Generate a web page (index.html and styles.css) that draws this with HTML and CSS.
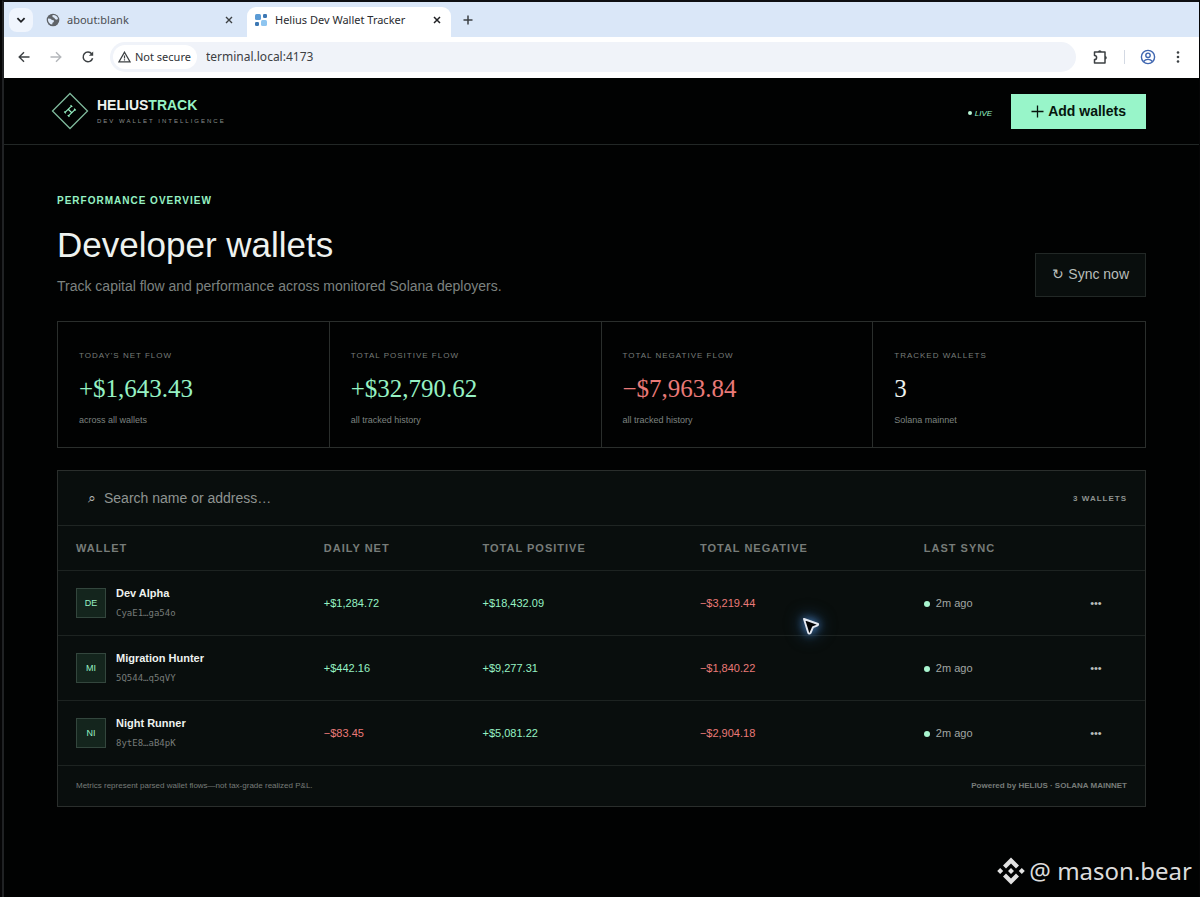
FILE: index.html
```html
<!DOCTYPE html>
<html lang="en">
  <head>
    <title>Helius Dev Wallet Tracker</title>
    <meta charset="utf-8" />
    <meta name="viewport" content="width=device-width, initial-scale=1" />
    <link rel="stylesheet" href="styles.css">
  </head>
  <body>
    <div class="browser">
      <div class="tabs">
        <button class="tab-list" aria-label="Search tabs">
          <svg width="12" height="12" viewBox="0 0 10 10"><path d="M2 3.500l3 3 3-3" fill="none" stroke="#202124" stroke-width="1.500" /></svg>
        </button>
        <div class="tab">
          <svg width="14" height="14" viewBox="0 0 14 14"><circle cx="7" cy="7" r="6.300" fill="#5f6368" /><path d="M2 5.500l2.500.300 1.500 1.200 1.800.200v1.800l-1.300.700-.300 1.800C3.500 11.300 1.600 8.500 2 5.500zM6.500 2c2.500-.400 4.800 1 5.500 3.500l-1 1.200-1.800-.400-1-1.500L6.500 4z" fill="#dce8f8" /></svg>
          <span class="tab-title">about:blank</span>
          <button class="tab-close" aria-label="Close tab"><svg width="10" height="10" viewBox="0 0 10 10"><path d="M2 2l6 6M8 2l-6 6" stroke="#3c4043" stroke-width="1.400" /></svg></button>
        </div>
        <div class="tab active">
          <svg width="14" height="14" viewBox="0 0 14 14"><rect x="1" y="1" width="6" height="6" rx="1.500" fill="#5b9bd5" /><rect x="9" y="1" width="4" height="4" rx="1.200" fill="#3c78b4" /><rect x="1" y="9" width="4" height="4" rx="1.200" fill="#3c78b4" /><rect x="7" y="7" width="6" height="6" rx="1.500" fill="#8ec5f0" /></svg>
          <span class="tab-title">Helius Dev Wallet Tracker</span>
          <button class="tab-close" aria-label="Close tab"><svg width="10" height="10" viewBox="0 0 10 10"><path d="M2 2l6 6M8 2l-6 6" stroke="#202124" stroke-width="1.500" /></svg></button>
        </div>
        <button class="tab-new" aria-label="New tab"><svg width="12" height="12" viewBox="0 0 12 12"><path d="M6 1.500v9M1.500 6h9" stroke="#3c4043" stroke-width="1.500" /></svg></button>
      </div>
      <div class="toolbar">
        <div class="nav">
          <button aria-label="Back"><svg width="14" height="14" viewBox="0 0 14 14"><path d="M12.500 7h-10M7 2.200L2.200 7 7 11.800" fill="none" stroke="#3c4043" stroke-width="1.400" /></svg></button>
          <button aria-label="Forward"><svg width="14" height="14" viewBox="0 0 14 14"><path d="M1.500 7h10M7 2.200L11.800 7 7 11.800" fill="none" stroke="#b4b7bb" stroke-width="1.400" /></svg></button>
          <button aria-label="Reload"><svg width="14" height="14" viewBox="0 0 14 14"><path d="M11.600 8.200A4.800 4.800 0 1 1 10.800 4" fill="none" stroke="#3c4043" stroke-width="1.500" /><path d="M12.200 1.500v4.300H7.900z" fill="#3c4043" /></svg></button>
        </div>
        <div class="omnibox">
          <button class="secure">
            <svg width="13" height="12" viewBox="0 0 13 12"><path d="M6.500 1.200L12 10.800H1z" fill="none" stroke="#3c4043" stroke-width="1.300" /><path d="M6.500 4.500v3M6.500 8.300v1.200" stroke="#3c4043" stroke-width="1.200" /></svg>
            Not secure
          </button>
          <input class="url" type="text" value="terminal.local:4173" aria-label="Address" />
        </div>
        <div class="tools">
          <button aria-label="Extensions"><svg width="18" height="18" viewBox="0 0 18 18"><path d="M3.500 4h10.500v11H3.500v-3.400a2 2 0 0 0 0-4.200z" fill="none" stroke="#3c4043" stroke-width="1.500" stroke-linejoin="round" /><path d="M7 4a1.800 1.800 0 0 1 3.600 0zM14 8a1.800 1.800 0 0 1 0 3.600z" fill="#3c4043" /></svg></button>
          <span class="divider"></span>
          <button aria-label="Profile"><svg width="16" height="16" viewBox="0 0 16 16"><g fill="none" stroke="#3f66b0" stroke-width="1.400"><circle cx="8" cy="8" r="6.600" /><circle cx="8" cy="6.300" r="2.200" /><path d="M3.600 12.500c1.200-1.500 2.700-2.100 4.400-2.100s3.200.600 4.400 2.100" /></g></svg></button>
          <button aria-label="Menu"><svg width="14" height="14" viewBox="0 0 14 14" fill="#3c4043"><circle cx="7" cy="2.500" r="1.300" /><circle cx="7" cy="7" r="1.300" /><circle cx="7" cy="11.500" r="1.300" /></svg></button>
        </div>
      </div>

      <header class="header">
        <div class="brand">
          <svg width="38" height="38" viewBox="0 0 38 38"><path d="M19 1.500L36.500 19 19 36.500 1.500 19z" fill="none" stroke="#7fb99c" stroke-width="1.300" /><g transform="rotate(45 19 19)" fill="none" stroke="#96f2c4" stroke-width="1.200"><path d="M16.500 14.500v9M21.500 14.500v9M16.500 19h5M15.300 14.500h2.400M15.300 23.500h2.400M20.300 14.500h2.400M20.300 23.500h2.400" /></g></svg>
          <div>
            <div class="name">HELIUS<span class="green">TRACK</span></div>
            <div class="tagline">DEV WALLET INTELLIGENCE</div>
          </div>
        </div>
        <div class="actions">
          <em class="live">LIVE</em>
          <button class="add">
            <svg width="13" height="13" viewBox="0 0 13 13"><path d="M6.500 .500v12M.500 6.500h12" stroke="#06150d" stroke-width="1.300" /></svg>
            Add wallets
          </button>
        </div>
      </header>

      <main class="main">
        <section class="intro">
          <div>
            <div class="eyebrow">PERFORMANCE OVERVIEW</div>
            <h1>Developer wallets</h1>
            <p>Track capital flow and performance across monitored Solana deployers.</p>
          </div>
          <button class="sync">↻ Sync now</button>
        </section>

        <section class="stats">
          <div class="stat">
            <div class="label">TODAY'S NET FLOW</div>
            <div class="value green">+$1,643.43</div>
            <div class="note">across all wallets</div>
          </div>
          <div class="stat">
            <div class="label">TOTAL POSITIVE FLOW</div>
            <div class="value green">+$32,790.62</div>
            <div class="note">all tracked history</div>
          </div>
          <div class="stat">
            <div class="label">TOTAL NEGATIVE FLOW</div>
            <div class="value red">−$7,963.84</div>
            <div class="note">all tracked history</div>
          </div>
          <div class="stat">
            <div class="label">TRACKED WALLETS</div>
            <div class="value">3</div>
            <div class="note">Solana mainnet</div>
          </div>
        </section>

        <section class="panel">
          <div class="search">
            <label for="search">⌕</label>
            <input type="text" id="search" placeholder="Search name or address…" />
            <span class="count">3 WALLETS</span>
          </div>
          <table class="wallets">
            <colgroup>
              <col class="col-wallet" />
              <col class="col-daily" />
              <col class="col-positive" />
              <col class="col-negative" />
              <col class="col-sync" />
              <col />
            </colgroup>
            <thead>
              <tr>
                <th>WALLET</th>
                <th>DAILY NET</th>
                <th>TOTAL POSITIVE</th>
                <th>TOTAL NEGATIVE</th>
                <th>LAST SYNC</th>
                <th></th>
              </tr>
            </thead>
            <tbody>
              <tr>
                <td>
                  <div class="wallet">
                    <span class="avatar">DE</span>
                    <div>
                      <b>Dev Alpha</b>
                      <code>CyaE1…ga54o</code>
                    </div>
                  </div>
                </td>
                <td class="green">+$1,284.72</td>
                <td class="green">+$18,432.09</td>
                <td class="red">−$3,219.44</td>
                <td class="ago">2m ago</td>
                <td><button class="more" aria-label="Dev Alpha options">•••</button></td>
              </tr>
              <tr>
                <td>
                  <div class="wallet">
                    <span class="avatar">MI</span>
                    <div>
                      <b>Migration Hunter</b>
                      <code>5Q544…q5qVY</code>
                    </div>
                  </div>
                </td>
                <td class="green">+$442.16</td>
                <td class="green">+$9,277.31</td>
                <td class="red">−$1,840.22</td>
                <td class="ago">2m ago</td>
                <td><button class="more" aria-label="Migration Hunter options">•••</button></td>
              </tr>
              <tr>
                <td>
                  <div class="wallet">
                    <span class="avatar">NI</span>
                    <div>
                      <b>Night Runner</b>
                      <code>8ytE8…aB4pK</code>
                    </div>
                  </div>
                </td>
                <td class="red">−$83.45</td>
                <td class="green">+$5,081.22</td>
                <td class="red">−$2,904.18</td>
                <td class="ago">2m ago</td>
                <td><button class="more" aria-label="Night Runner options">•••</button></td>
              </tr>
            </tbody>
          </table>
          <div class="panel-footer">
            <span>Metrics represent parsed wallet flows—not tax-grade realized P&amp;L.</span>
            <b>Powered by HELIUS · SOLANA MAINNET</b>
          </div>
        </section>
      </main>
    </div>

    <svg class="cursor" width="18" height="18" viewBox="0 0 18 18"><path d="M2 2l14 5c.500 1-.500 1.600-5 3.200L8.500 16c-.800 1-1.800.600-2.200 0z" fill="#020305" stroke="#e4e9f2" stroke-width="1.900" stroke-linejoin="round" /></svg>

    <div class="watermark">
      <svg width="28" height="28" viewBox="0 0 28 28" fill="#e2e2e2"><path d="M14 .500l8 8-3 3-5-5-5 5-3-3zM14 27.500l8-8-3-3-5 5-5-5-3 3zM14 11l3 3-3 3-3-3zM3.200 11l3 3-3 3-3-3zM24.800 11l3 3-3 3-3-3z" /></svg>
      <span>@ mason.bear</span>
    </div>
  </body>
</html>
```
FILE: styles.css
```css
* {
  box-sizing: border-box;
}
body {
  margin: 0;
  padding-left: 2px;
  background-color: #050506;
  color: #eef2ef;
  font-family: "Liberation Sans", Arial, sans-serif;
}
button {
  padding: 0;
  border: 0;
  background: none;
  font-family: inherit;
}
svg {
  display: block;
  flex: none;
}
.green {
  color: #96f2c4;
}
.red {
  color: #ea7a78;
}

/* browser window */
.browser {
  min-height: 100vh;
  margin-right: 1px;
  border-top: 2px solid #0e0f12;
  border-left: 2px solid #202224;
  background-color: #010202;
}
.tabs {
  display: flex;
  align-items: center;
  height: 35px;
  padding-left: 5px;
  background-color: #dae7f8;
  font-family: "Noto Sans", sans-serif;
  font-size: 11px;
  color: #4a4d51;
}
.tab-list {
  display: flex;
  align-items: center;
  justify-content: center;
  width: 24px;
  height: 24px;
  border-radius: 8px;
  background-color: #f0f5fd;
}
.tab {
  display: flex;
  align-items: center;
  gap: 7px;
  width: 204px;
  padding: 0 9px 0 7px;
  margin-left: 6px;
}
.tab.active {
  align-self: flex-end;
  height: 30px;
  margin-left: 4px;
  padding-bottom: 5px;
  border-radius: 9px 9px 0 0;
  background-color: #fff;
  color: #2a2c2f;
}
.tab-title {
  flex: 1;
  white-space: nowrap;
}
.tab-new {
  margin-left: 11px;
}
.toolbar {
  display: flex;
  align-items: center;
  height: 41px;
  padding: 0 14px 2px 13px;
  background-color: #fff;
  font-family: "Noto Sans", sans-serif;
}
.nav {
  display: flex;
  gap: 18px;
}
.omnibox {
  display: flex;
  align-items: center;
  flex: 1;
  height: 30px;
  margin: 0 15px;
  padding: 0 3px;
  border-radius: 15px;
  background-color: #f0f3f9;
}
.secure {
  display: flex;
  align-items: center;
  gap: 4px;
  height: 24px;
  padding: 0 6px 0 5px;
  border-radius: 12px;
  background-color: #fff;
  color: #303236;
  font-size: 11px;
  white-space: nowrap;
}
.url {
  flex: 1;
  min-width: 0;
  padding: 0 9px;
  border: 0;
  background: none;
  color: #3c4043;
  font-family: inherit;
  font-size: 12px;
}
.tools {
  display: flex;
  align-items: center;
  gap: 15px;
}
.divider {
  width: 1px;
  height: 14px;
  background-color: #d3d9e3;
}

/* page */
.header {
  display: flex;
  align-items: center;
  justify-content: space-between;
  height: 67px;
  padding: 0 53px 0 47px;
  border-bottom: 1px solid #222726;
}
.brand {
  display: flex;
  align-items: center;
  gap: 8px;
}
.name {
  padding-top: 2px;
  font-size: 14px;
  font-weight: bold;
  line-height: 18px;
}
.tagline {
  color: #8a8f8c;
  font-size: 6px;
  line-height: 14px;
  letter-spacing: 2px;
}
.actions {
  display: flex;
  align-items: center;
  gap: 19px;
}
.live {
  display: flex;
  align-items: center;
  gap: 3px;
  padding-top: 4px;
  color: #96f2c4;
  font-size: 8px;
}
.live::before {
  content: "";
  width: 4px;
  height: 4px;
  border-radius: 50%;
  background-color: #b8f5d5;
}
.add {
  display: flex;
  align-items: center;
  gap: 4px;
  height: 35px;
  padding: 0 20px;
  background-color: #98f5c9;
  color: #06150d;
  font-size: 14px;
  font-weight: bold;
}
.main {
  padding: 49px 53px 0;
}
.intro {
  display: flex;
  align-items: flex-end;
  justify-content: space-between;
  margin-bottom: 24px;
}
.eyebrow {
  color: #96f2c4;
  font-size: 10px;
  font-weight: bold;
  line-height: 14px;
  letter-spacing: 1px;
}
h1 {
  margin: 17px 0 0;
  font-size: 35px;
  font-weight: normal;
  line-height: 40px;
}
.intro p {
  margin: 12px 0 0;
  padding-bottom: 2px;
  color: #7d8280;
  font-size: 14px;
  line-height: 18px;
}
.sync {
  height: 44px;
  padding: 0 16px 2px;
  border: 1px solid #222826;
  background-color: #090e0d;
  color: #b9bebb;
  font-size: 14px;
}
.stats {
  display: grid;
  grid-template-columns: repeat(4, 1fr);
  margin-bottom: 22px;
  border: 1px solid #2a2e2c;
}
.stat {
  padding: 28px 21px 21px;
  border-right: 1px solid #2a2e2c;
}
.stat:last-child {
  border-right: 0;
}
.label {
  color: #777c79;
  font-size: 8px;
  line-height: 12px;
  letter-spacing: 1px;
}
.value {
  margin: 12px 0 10px;
  font-family: "Liberation Serif", serif;
  font-size: 25px;
  line-height: 30px;
}
.note {
  color: #7d8280;
  font-size: 9px;
  line-height: 12px;
}
.panel {
  border: 1px solid #2a2e2c;
  background-color: #090e0d;
}
.search {
  display: flex;
  align-items: center;
  height: 55px;
  padding: 0 18px 0 30px;
  border-bottom: 1px solid #1f2523;
}
.search label {
  color: #b9bebb;
  font-size: 14px;
}
.search input {
  flex: 1;
  padding: 0 8px;
  border: 0;
  outline: 0;
  background: none;
  color: #eef2ef;
  font-family: inherit;
  font-size: 14px;
}
.search input::placeholder {
  color: #8f9491;
}
.count {
  color: #8f9491;
  font-size: 8px;
  font-weight: bold;
  letter-spacing: 1px;
}
.wallets {
  width: 100%;
  border-collapse: collapse;
  table-layout: fixed;
  font-size: 11px;
}
.col-wallet {
  width: 22.8%;
}
.col-daily {
  width: 14.6%;
}
.col-positive {
  width: 20%;
}
.col-negative {
  width: 20.6%;
}
.col-sync {
  width: 15.3%;
}
th,
td {
  padding: 0 18px;
  border-bottom: 1px solid #1d2321;
  text-align: left;
}
th {
  height: 44px;
  color: #777c79;
  letter-spacing: 1px;
}
td {
  height: 65px;
}
.wallet {
  display: flex;
  align-items: center;
  gap: 10px;
}
.avatar {
  display: flex;
  align-items: center;
  justify-content: center;
  width: 30px;
  height: 30px;
  border: 1px solid #33463d;
  background-color: #14251d;
  color: #96f2c4;
  font-size: 9px;
}
.wallet b,
.wallet code {
  display: block;
  line-height: 20px;
}
.wallet code {
  color: #777c79;
  font-family: "DejaVu Sans Mono", monospace;
  font-size: 9px;
}
.ago {
  color: #a2a7a4;
}
.ago::before {
  content: "";
  display: inline-block;
  width: 6px;
  height: 6px;
  margin-right: 6px;
  border-radius: 50%;
  background-color: #a9f5cf;
}
.more {
  color: #b9bebb;
  font-size: 11px;
}
.panel-footer {
  display: flex;
  align-items: center;
  justify-content: space-between;
  height: 40px;
  padding: 0 18px;
  color: #777c79;
  font-size: 8px;
}

/* overlays */
.cursor {
  position: absolute;
  top: 617px;
  left: 802px;
  filter: drop-shadow(0 0 5px #4f86c8) drop-shadow(0 0 8px #1f4a78);
}
.watermark {
  position: absolute;
  right: 8px;
  bottom: 10px;
  display: flex;
  align-items: center;
  gap: 4px;
  color: #dcdcdc;
  font-family: "Noto Sans", sans-serif;
  font-size: 24px;
}
```
